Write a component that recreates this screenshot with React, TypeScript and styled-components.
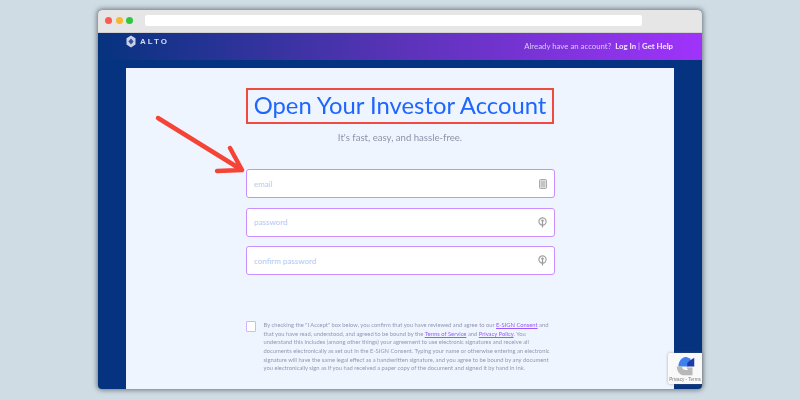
import React from 'react';
import styled, { createGlobalStyle } from 'styled-components';

const GlobalStyle = createGlobalStyle`
  html, body {
    margin: 0;
    width: 800px;
    height: 400px;
    overflow: hidden;
    background: #d0dce4;
    font-family: Lato, "Noto Sans", sans-serif;
  }
`;

const Stage = styled.div`
  position: relative;
  width: 800px;
  height: 400px;
  padding: 10px 98px 11px;
  box-sizing: border-box;
`;

const BrowserWindow = styled.div`
  display: flex;
  flex-direction: column;
  height: 100%;
  border-radius: 4px;
  overflow: hidden;
  background: #06337f;
  box-shadow: 0 0 5px 1px rgba(70, 80, 88, 0.75);
  filter: blur(0.3px);
`;

const TitleBar = styled.div`
  display: flex;
  align-items: center;
  flex-shrink: 0;
  height: 22.5px;
  padding: 0 0 0 7px;
  gap: 3.5px;
  background: #e6e6e6;
  border-bottom: 1px solid #d2d2d2;
  box-sizing: border-box;
`;

const Dot = styled.span<{ $color: string }>`
  width: 7px;
  height: 7px;
  border-radius: 50%;
  background: ${(p) => p.$color};
`;

const AddressBar = styled.div`
  width: 497px;
  height: 11px;
  margin-left: 8px;
  border-radius: 2px;
  background: #fff;
`;

const Header = styled.header`
  display: flex;
  justify-content: space-between;
  flex-shrink: 0;
  height: 27.5px;
  padding: 0 28px;
  background: linear-gradient(90deg, #06337f 0%, #5a33b8 50%, #a033fb 100%);
`;

const Logo = styled.div`
  display: flex;
  align-items: center;
  align-self: flex-start;
  gap: 4px;
  height: 18px;
  color: #d5dcee;
  font-family: "Liberation Sans", sans-serif;
  font-size: 8px;
  font-weight: 700;
  letter-spacing: 2px;
`;

const HeaderNav = styled.nav`
  display: flex;
  align-items: center;
  color: #d9c9fa;
  font-size: 7.8px;
  white-space: nowrap;
  margin-right: 1px;
`;

const NavLink = styled.b`
  color: #f1e6ff;
  font-weight: 700;
`;

const Main = styled.main`
  flex: 1;
  padding: 8px 28px 0;
  min-height: 0;
`;

const Card = styled.div`
  display: flex;
  flex-direction: column;
  align-items: center;
  height: 100%;
  padding-top: 20px;
  box-sizing: border-box;
  background: #eef5ff;
`;

const Title = styled.h1`
  width: 308px;
  height: 36px;
  margin: 0;
  border: 2px solid #f04a40;
  box-sizing: border-box;
  color: #1f66ff;
  font-size: 23.8px;
  font-weight: 400;
  line-height: 31px;
  text-align: center;
  white-space: nowrap;
`;

const Subtitle = styled.p`
  margin: 6px 0 0;
  color: #8d93a8;
  font-size: 9.6px;
  line-height: 16px;
`;

const Fields = styled.div`
  display: flex;
  flex-direction: column;
  gap: 9.5px;
  width: 309px;
  margin-top: 23px;
`;

const Field = styled.div`
  display: flex;
  align-items: center;
  justify-content: space-between;
  height: 29px;
  padding: 0 7px 0 7.5px;
  border: 1.5px solid #c98fff;
  border-radius: 3px;
  box-sizing: border-box;
  background: #fff;
  color: #b4c6f5;
  font-size: 8px;
`;

const Consent = styled.div`
  display: flex;
  gap: 8px;
  width: 309px;
  margin-top: 46px;
`;

const Checkbox = styled.span`
  flex-shrink: 0;
  width: 10.5px;
  height: 10.5px;
  border: 1px solid #d4b4ff;
  border-radius: 1px;
  box-sizing: border-box;
  background: #fff;
`;

const Legal = styled.p`
  margin: 0 0 0 -0.5px;
  color: #9498b2;
  font-size: 5.8px;
  line-height: 8.65px;
  white-space: nowrap;
`;

const LegalLink = styled.a`
  color: #9a5cf6;
  text-decoration: underline;
`;

const Annotation = styled.svg`
  position: absolute;
  left: 150px;
  top: 110px;
`;

const RecaptchaBadge = styled.div`
  position: absolute;
  left: 668px;
  top: 353px;
  display: flex;
  flex-direction: column;
  align-items: center;
  width: 34px;
  height: 31px;
  padding-top: 3px;
  overflow: hidden;
  border-radius: 2px 0 0 2px;
  box-sizing: border-box;
  background: #f9f9f9;
  box-shadow: 0 0 3px rgba(110, 110, 110, 0.55);
`;

const RecaptchaText = styled.span`
  color: #7c7c7c;
  font-family: "Liberation Sans", sans-serif;
  font-size: 4.6px;
  line-height: 6px;
  white-space: nowrap;
`;

const DocIcon = () => (
  <svg width="8" height="10" viewBox="0 0 8 10" fill="none">
    <rect x="0.5" y="0.5" width="7" height="9" rx="1" fill="#ddd" stroke="#a8a8a8" />
    <path d="M2 3h4M2 5h4M2 7h4" stroke="#a0a0a0" strokeWidth="0.8" />
  </svg>
);

const KeyIcon = () => (
  <svg width="9" height="11" viewBox="0 0 9 11" fill="none">
    <circle cx="4.5" cy="4.5" r="3.6" stroke="#a2a2a2" strokeWidth="1.2" />
    <circle cx="4.5" cy="3.6" r="1.2" fill="#9a9a9a" />
    <path d="M4.5 4v6.5" stroke="#9a9a9a" strokeWidth="1.2" />
  </svg>
);

export default function App() {
  return (
    <Stage>
      <GlobalStyle />
      <BrowserWindow>
        <TitleBar>
          <Dot $color="#fb5a55" />
          <Dot $color="#fbb62f" />
          <Dot $color="#2ec840" />
          <AddressBar />
        </TitleBar>
        <Header>
          <Logo>
            <svg width="10" height="13" viewBox="0 0 10 13">
              <path d="M5 0.5 9.5 3.2v6.4L5 12.5.5 9.6V3.2z" fill="#c9d2e8" />
              <path d="M5 3.6 7.6 6.5 5 9.4 2.4 6.5z" fill="#3a4f9c" />
            </svg>
            ALTO
          </Logo>
          <HeaderNav>
            Already have an account?&nbsp;&nbsp;<NavLink>Log In</NavLink>&nbsp;|&nbsp;<NavLink>Get Help</NavLink>
          </HeaderNav>
        </Header>
        <Main>
          <Card>
            <Title>Open Your Investor Account</Title>
            <Subtitle>It's fast, easy, and hassle-free.</Subtitle>
            <Fields>
              <Field>email<DocIcon /></Field>
              <Field>password<KeyIcon /></Field>
              <Field>confirm password<KeyIcon /></Field>
            </Fields>
            <Consent>
              <Checkbox />
              <Legal>
                By checking the "I Accept" box below, you confirm that you have reviewed and agree to our <LegalLink>E-SIGN Consent</LegalLink> and<br />
                that you have read, understood, and agreed to be bound by the <LegalLink>Terms of Service</LegalLink> and <LegalLink>Privacy Policy</LegalLink>. You<br />
                understand this includes (among other things) your agreement to use electronic signatures and receive all<br />
                documents electronically as set out in the E-SIGN Consent. Typing your name or otherwise entering an electronic<br />
                signature will have the same legal effect as a handwritten signature, and you agree to be bound by any document<br />
                you electronically sign as if you had received a paper copy of the document and signed it by hand in ink.
              </Legal>
            </Consent>
          </Card>
        </Main>
      </BrowserWindow>
      <Annotation width="100" height="70" viewBox="0 0 100 70" fill="none">
        <path d="M8 8 92 60M80 38l12 22-25 1" stroke="#f54336" strokeWidth="4.5" strokeLinecap="round" strokeLinejoin="round" />
      </Annotation>
      <RecaptchaBadge>
        <svg width="21" height="21" viewBox="0 0 24 24" fill="none">
          <path d="M4 12 4 10C5 4 9 1 13 1l5 2-3 9H4z" fill="#3f80ee" />
          <path d="M14 8l3-3 5-3v10h-8z" fill="#1c3aa9" />
          <path d="M2 12h6c.5 3 2 4 4 4h3l-2-3h7v9H9c-4-1-7-5-7-10z" fill="#b8b8b8" />
        </svg>
        <RecaptchaText>Privacy - Terms</RecaptchaText>
      </RecaptchaBadge>
    </Stage>
  );
}
